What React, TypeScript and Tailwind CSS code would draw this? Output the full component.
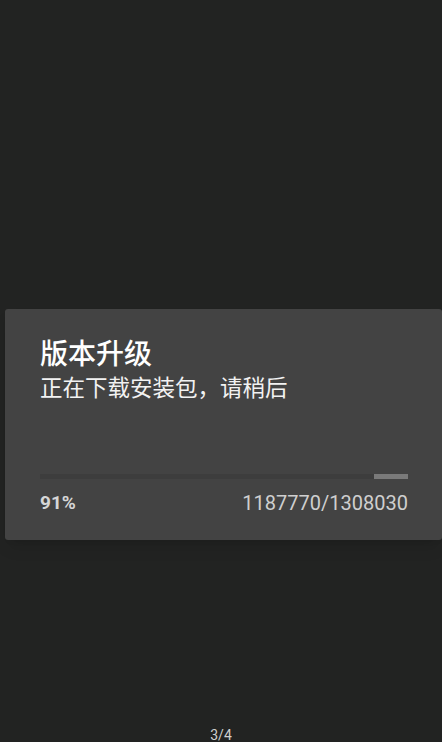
import React from "react";

export default function App() {
  const downloaded = 1187770;
  const total = 1308030;
  const pct = Math.round((downloaded / total) * 100);
  const fill = (downloaded / total) * 100;

  return (
    <div
      className="flex h-[742px] w-[442px] flex-col overflow-hidden bg-[#222322]"
      style={{ fontFamily: 'Roboto, "Noto Sans CJK SC", sans-serif' }}
    >
      {/* upgrade dialog */}
      <div className="ml-[5px] mt-[309px] h-[231px] rounded-[3px] bg-[#434343] pl-[35px] pr-[34px] pt-[29px] shadow-lg">
        <h1 className="text-[28px] font-medium leading-[34px] text-white">版本升级</h1>
        <p className="mt-[2px] text-[22.5px] leading-[28px] text-[#f2f2f2]">正在下载安装包，请稍后</p>

        <div className="mt-[72px] flex h-[5px] w-full">
          <div className="h-full bg-[#3d3d3d]" style={{ width: `${fill}%` }} />
          <div className="h-full flex-1 bg-[#7a7a7a]" />
        </div>

        <div className="mt-[12px] flex items-center justify-between text-[20px] leading-[24px]">
          <span className="text-[19px] font-bold text-[#d6d6d6]">{pct}%</span>
          <span className="text-[#cfcfcf]">
            {downloaded}/{total}
          </span>
        </div>
      </div>

      <div className="mt-auto text-center text-[14px] leading-[14px] text-[#cfcfcf]">3/4</div>
    </div>
  );
}
